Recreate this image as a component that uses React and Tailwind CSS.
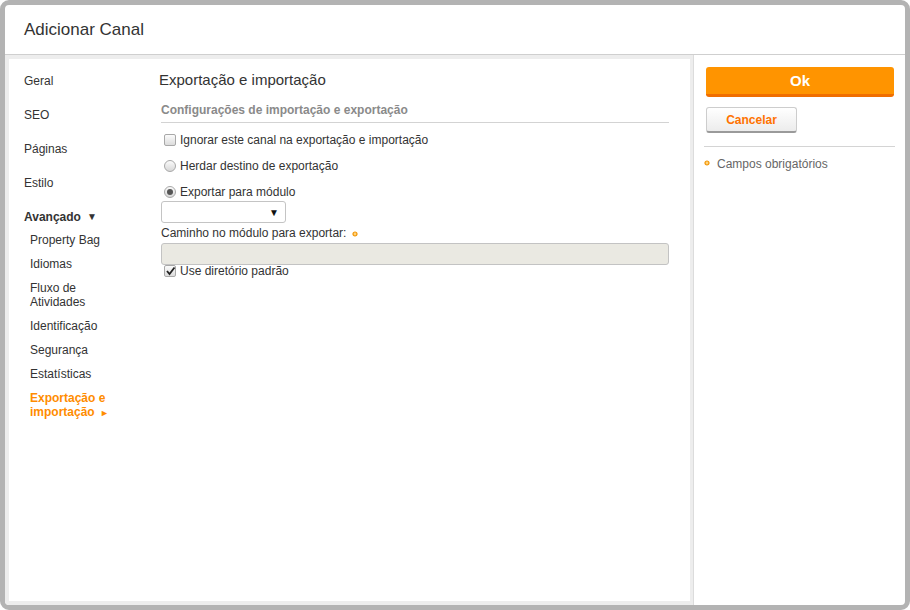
import React from 'react';

const font = { fontFamily: '"Liberation Sans", Arial, sans-serif' };

const navMain = ['Geral', 'SEO', 'Páginas', 'Estilo'];
const navSub = ['Property Bag', 'Idiomas', 'Fluxo de Atividades', 'Identificação', 'Segurança', 'Estatísticas'];

const Asterisk = ({ className = '' }) => (
  <svg width="6" height="6" viewBox="0 0 6 6" className={className}>
    <circle cx="3" cy="3" r="2" fill="#ffd27a" stroke="#f29400" strokeWidth="1.2" />
  </svg>
);

const Checkbox = ({ checked }) => (
  <span className="relative inline-flex w-[12px] h-[12px] rounded-[2px] border border-[#a8a8a8] bg-gradient-to-b from-[#fbfbfb] to-[#dcdcdc] shrink-0">
    {checked && (
      <svg width="11" height="10" viewBox="0 0 11 10" className="absolute left-[0px] top-[0px]">
        <path d="M2 5 L4.5 8 L9.5 1.5" fill="none" stroke="#222" strokeWidth="1.8" />
      </svg>
    )}
  </span>
);

const Radio = ({ checked }) => (
  <span className="inline-flex items-center justify-center w-[12px] h-[12px] rounded-full border border-[#a8a8a8] bg-gradient-to-b from-[#fbfbfb] to-[#d8d8d8] shrink-0">
    {checked && <span className="w-[6px] h-[6px] rounded-full bg-[#555]" />}
  </span>
);

export default function App() {
  return (
    <div className="w-[910px] h-[610px] bg-white text-[#333]" style={font}>
      <div className="w-full h-full rounded-[9px] border-[5px] border-[#b3b3b3] flex flex-col overflow-hidden">
        <div className="h-[50px] shrink-0 border-b border-[#cfcfcf] flex items-center pl-[19px]">
          <h1 className="text-[17px] text-[#333]">Adicionar Canal</h1>
        </div>
        <div className="flex flex-1 min-h-0">
          <div className="flex-1 bg-[#ededed] pt-[4px] pl-[4px] pr-[3px] pb-[4px] border-r border-[#dcdcdc]">
            <div className="h-full bg-white flex">
              <nav className="w-[150px] shrink-0 pl-[15px] pt-[15px] text-[12px]">
                {navMain.map((n) => (
                  <div key={n} className="h-[34px] leading-[14px]">{n}</div>
                ))}
                <div className="font-bold leading-[14px] h-[23px] flex items-start">
                  Avançado <span className="ml-[6px] text-[10px]">▼</span>
                </div>
                <div className="pl-[6px]">
                  {navSub.map((n) => (
                    <div key={n} className={`leading-[14px] ${n === 'Fluxo de Atividades' ? 'h-[38px] w-[70px]' : 'h-[24px]'}`}>{n}</div>
                  ))}
                  <div className="leading-[14px] font-bold text-[#ff8c00]">
                    <div>Exportação e</div>
                    <div className="whitespace-nowrap">
                      importação <span className="text-[9px] ml-[2px]">►</span>
                    </div>
                  </div>
                </div>
              </nav>
              <div className="flex-1 pr-[21px] pt-[12px] text-[12px]">
                <h2 className="text-[15px] leading-[18px] text-[#333]">Exportação e importação</h2>
                <div className="ml-[2px] mt-[14px] pb-[5px] border-b border-[#d3d3d3] font-bold text-[#8a8a8a] leading-[14px]">
                  Configurações de importação e exportação
                </div>
                <label className="flex items-center gap-[4px] ml-[5px] mt-[10px] leading-[14px]">
                  <Checkbox /> Ignorar este canal na exportação e importação
                </label>
                <label className="flex items-center gap-[4px] ml-[5px] mt-[12px] leading-[14px]">
                  <Radio /> Herdar destino de exportação
                </label>
                <label className="flex items-center gap-[4px] ml-[5px] mt-[12px] leading-[14px]">
                  <Radio checked /> Exportar para módulo
                </label>
                <div className="ml-[2px] mt-[2px] w-[125px] h-[22px] border border-[#c4c4c4] rounded-[3px] flex items-center justify-end pr-[6px] text-[10px] text-[#111]">
                  ▼
                </div>
                <div className="ml-[2px] mt-[3px] leading-[14px] flex items-center">
                  Caminho no módulo para exportar:
                  <Asterisk className="ml-[6px] mt-[2px]" />
                </div>
                <div className="ml-[2px] mt-[3px] h-[22px] bg-[#eae9e2] border border-[#c3c3c3] rounded-[3px]" />
                <label className="flex items-center gap-[4px] ml-[5px] -mt-[1px] leading-[14px]">
                  <Checkbox checked /> Use diretório padrão
                </label>
              </div>
            </div>
          </div>
          <div className="w-[211px] shrink-0 px-[10px] pt-[12px]">
            <button className="block ml-[2px] w-[188px] h-[30px] pt-[2px] rounded-[3px] bg-[#ff9400] border-b-[3px] border-[#f06e00] text-white font-bold text-[15px]">
              Ok
            </button>
            <button className="block ml-[2px] mt-[10px] w-[91px] h-[26px] rounded-[3px] border border-[#cdcdcd] border-b-[2px] border-b-[#9a9a9a] bg-gradient-to-b from-white to-[#ececec] text-[#ff7200] font-bold text-[12px]">
              Cancelar
            </button>
            <div className="mt-[13px] border-t border-[#d4d4d4] w-[191px]" />
            <div className="mt-[10px] flex items-center text-[12px] text-[#666] leading-[14px]">
              <Asterisk className="mr-[7px] -mt-[2px]" />
              Campos obrigatórios
            </div>
          </div>
        </div>
      </div>
    </div>
  );
}
